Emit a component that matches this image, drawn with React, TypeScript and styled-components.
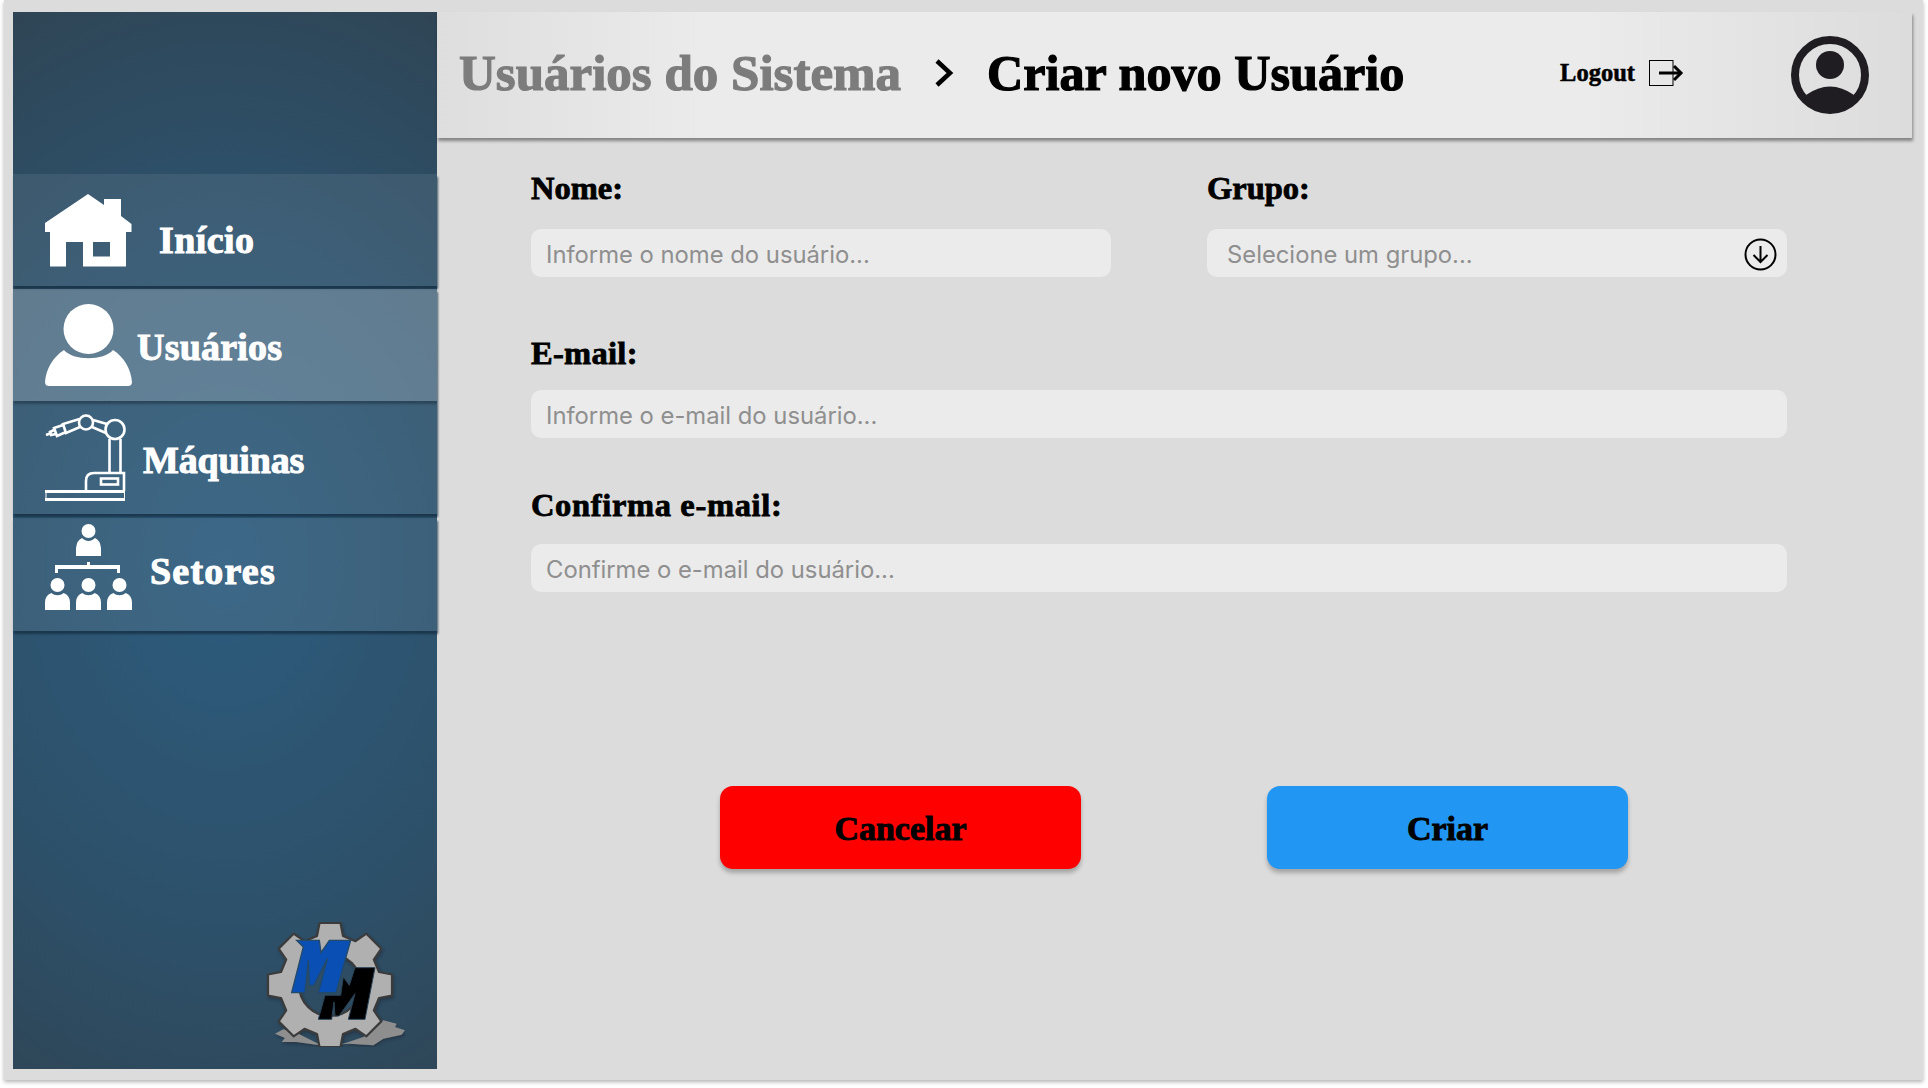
import React from "react";
import styled, { createGlobalStyle } from "styled-components";

const Global = createGlobalStyle`
  html, body { margin: 0; padding: 0; background: #fff; }
  #root { width: 1928px; height: 1088px; overflow: hidden; }
`;

const display = `"Liberation Serif", "Times New Roman", serif`;

const Page = styled.div`
  box-sizing: border-box;
  width: 1919px;
  height: 1080px;
  margin-left: 4px;
  padding: 12px 11px 11px 9px;
  background: #dcdcdc;
  box-shadow: 0 2px 4px rgba(0, 0, 0, 0.3);
  display: flex;
`;

const Sidebar = styled.aside`
  width: 424px;
  flex: none;
  display: flex;
  flex-direction: column;
  padding-top: 162px;
  box-sizing: border-box;
  background: radial-gradient(ellipse 110% 58% at 50% 52%, #2d5c7e 0%, #2d5069 62%, #2f4555 100%);
`;

const NavItem = styled.div<{ $active?: boolean; $gap: number; $h: number; $mt?: number }>`
  height: ${(p) => p.$h}px;
  margin-top: ${(p) => p.$mt ?? 0}px;
  flex: none;
  box-sizing: border-box;
  padding-left: 32px;
  display: flex;
  align-items: center;
  gap: ${(p) => p.$gap}px;
  background: ${(p) => (p.$active ? "rgba(255, 255, 255, 0.25)" : "rgba(255, 255, 255, 0.08)")};
  box-shadow: 1px 3px 2px rgba(20, 45, 65, 0.75);
`;

const NavIcon = styled.svg<{ $mb?: number }>`
  flex: none;
  fill: #fff;
  margin-bottom: ${(p) => p.$mb ?? 0}px;
`;

const NavLabel = styled.span<{ $dy: number; $ls?: number }>`
  font: 700 38px ${display};
  -webkit-text-stroke: 1px #fff;
  color: #fff;
  letter-spacing: ${(p) => p.$ls ?? 0.2}px;
  position: relative;
  top: ${(p) => p.$dy}px;
`;

const LogoSlot = styled.div`
  margin-top: auto;
  padding: 0 31px 22px 0;
  display: flex;
  justify-content: flex-end;
`;

const Main = styled.main`
  flex: 1;
  min-width: 0;
  display: flex;
  flex-direction: column;
`;

const Header = styled.header`
  height: 126px;
  flex: none;
  box-sizing: border-box;
  padding: 0 43px 0 22px;
  display: flex;
  align-items: center;
  background: linear-gradient(90deg, #dedede 0%, #ebebeb 18%, #ebebeb 78%, #dcdcdc 100%);
  box-shadow: 1px 3px 3px rgba(0, 0, 0, 0.4);
`;

const Crumb = styled.span<{ $muted?: boolean }>`
  font: 700 ${(p) => (p.$muted ? 51 : 50.2)}px ${display};
  white-space: nowrap;
  padding-bottom: 4px;
  color: ${(p) => (p.$muted ? "#7c7c7c" : "#000")};
  -webkit-text-stroke: 1.2px ${(p) => (p.$muted ? "#7c7c7c" : "#000")};
`;

const CrumbSep = styled.svg`
  margin: 0 33px 4px;
  flex: none;
`;

const LogoutWrap = styled.div`
  display: flex;
  align-items: center;
  gap: 14px;
  margin: 0 107px 4px auto;
`;

const LogoutText = styled.span`
  font: 700 24.5px ${display};
  -webkit-text-stroke: 0.5px #000;
  color: #000;
`;

const Form = styled.div`
  flex: 1;
  position: relative;
  padding: 29px 125px 0 94px;
  display: flex;
  flex-direction: column;
`;

const Row = styled.div<{ $mb: number }>`
  display: flex;
  gap: 96px;
  margin-bottom: ${(p) => p.$mb}px;
`;

const Field = styled.div<{ $w?: number }>`
  display: flex;
  flex-direction: column;
  flex: ${(p) => (p.$w ? `0 0 ${p.$w}px` : "1")};
`;

const Label = styled.label<{ $mb: number; $ls?: number }>`
  font: 700 32.5px/42px ${display};
  -webkit-text-stroke: 0.8px #000;
  color: #000;
  letter-spacing: ${(p) => p.$ls ?? 0}px;
  margin-bottom: ${(p) => p.$mb}px;
`;

const InputBox = styled.div<{ $pl?: number }>`
  height: 48px;
  box-sizing: border-box;
  border-radius: 10px;
  background: #ebebeb;
  padding: 2px 10px 0 ${(p) => p.$pl ?? 15}px;
  display: flex;
  align-items: center;
  justify-content: space-between;
  font: 400 23.8px Inter, "Liberation Sans", sans-serif;
  color: #8f8f8f;
`;

const Buttons = styled.div`
  display: flex;
  gap: 186px;
  margin-left: 189px;
  margin-top: 194px;
`;

const Btn = styled.button<{ $bg: string }>`
  width: 361px;
  height: 83px;
  border: 0;
  border-radius: 13px;
  padding: 2px 0 0;
  background: ${(p) => p.$bg};
  box-shadow: 0 4px 4px rgba(0, 0, 0, 0.25);
  font: 700 34px ${display};
  -webkit-text-stroke: 0.9px #000;
  color: #000;
`;

const House = () => (
  <NavIcon width="87" height="73" viewBox="0 0 87 73">
    <path fillRule="evenodd" d="M43 0 L59 11 V5 H76 V22 L86.500 30 V38 H81 V72.500 H38 V48 H21 V72.500 H5 V38 H0 V29 Z M48 48 V62.500 H65 V48 Z" />
  </NavIcon>
);

const Person = () => (
  <NavIcon width="87" height="82" viewBox="0 0 87 82">
    <circle cx="43.500" cy="25" r="25" />
    <path d="M19 46 C28 57 59 57 68 46 C79 53 86 65 87 78 C87 81 85 82 83 82 H4 C2 82 0 81 0 78 C1 65 8 53 19 46 Z" />
  </NavIcon>
);

const Robot = () => (
  <NavIcon width="81" height="87" viewBox="0 0 81 87" style={{ fill: "none" }}>
    <g stroke="#fff" strokeWidth="2.600" fill="none">
      <circle cx="41" cy="8.500" r="7" />
      <circle cx="70" cy="15.500" r="9.500" />
      <path d="M48 6 L62 10 M47 13 L61 19" />
      <path d="M34.500 5 L18 10 L21 19 L35 13" />
      <path d="M18 11 L9 14 L12 22 L21 18" />
      <path d="M9 16 L5 18 L6 21 L11 20" />
      <path d="M5 19.500 L1 21" />
      <path d="M64.500 25 V59 M75.500 25 V59" />
      <path d="M41 77 V67 Q41 59 49 59 H79 V77" />
      <rect x="56" y="64.500" width="17" height="6" />
      <path d="M0 77.500 H80 M0 85.500 H80" strokeWidth="3" />
      <path d="M1 77 V86 M79.500 77 V86" strokeWidth="1" />
    </g>
  </NavIcon>
);

const Sectors = () => (
  <NavIcon width="87" height="87" viewBox="0 0 87 87" $mb={14}>
    <circle cx="43.500" cy="7" r="7" />
    <path d="M31 32 V24 Q32 16 37 14 C41 18 46 18 50 14 Q55 16 56 24 V32 Z" />
    <path d="M10 41 H42 V38 H45 V41 H75 V49 H72 V45 H13 V49 H10 Z" />
    {[12.500, 43.500, 74.500].map((x) => (
      <g key={x}>
        <circle cx={x} cy="61" r="7" />
        <path d={`M${x - 12.500} 86 V78 Q${x - 12} 71 ${x - 6} 69 C${x - 3} 72 ${x + 3} 72 ${x + 6} 69 Q${x + 12} 71 ${x + 12.500} 78 V86 Z`} />
      </g>
    ))}
  </NavIcon>
);

const gearPath = (() => {
  const cx = 64;
  const cy = 63;
  const outer = 62;
  const root = 49;
  const pts: string[] = [];
  for (let i = 0; i < 8; i++) {
    const a = (i * Math.PI) / 4 - Math.PI / 2;
    const ux = Math.cos(a);
    const uy = Math.sin(a);
    const vx = -uy;
    const vy = ux;
    const corner = (r: number, w: number) => `${(cx + ux * r + vx * w).toFixed(1)} ${(cy + uy * r + vy * w).toFixed(1)}`;
    pts.push(corner(root, -13), corner(outer, -10.5), corner(outer, 10.5), corner(root, 13));
  }
  const ring = `M${pts.join(" L")} Z`;
  const r = 31;
  const hole = `M${cx - r} ${cy} a${r} ${r} 0 1 0 ${2 * r} 0 a${r} ${r} 0 1 0 ${-2 * r} 0 Z`;
  return `${ring} ${hole}`;
})();

const Logo = () => (
  <svg width="140" height="125" viewBox="0 0 140 125">
    <defs>
      <filter id="logoShadow" x="-10%" y="-10%" width="120%" height="120%">
        <feDropShadow dx="1" dy="2" stdDeviation="1.500" floodColor="#1a2a35" floodOpacity="0.55" />
      </filter>
    </defs>
    <g filter="url(#logoShadow)">
      <g transform="scale(0.33333) translate(-78 -60)">
        <path d="M105 395 L130 382 L175 395 L235 425 L310 425 L370 405 L430 355 L470 365 L465 375 L495 385 L485 398 L430 410 L400 430 L330 425 L240 430 L170 420 L125 420 L135 408 Z" fill="#8e8e8e" />
      </g>
      <path d={gearPath} fill="#b0b0b0" fillRule="evenodd" stroke="#3b3b3b" strokeWidth="2.200" strokeLinejoin="round" />
    </g>
    <g transform="scale(0.33333) translate(-78 -60)">
      <path d="M170 115 H238 L243 152 L268 115 H332 L288 272 H235 L262 170 L222 250 H208 L205 175 L195 272 H155 L190 135 Z" fill="#0a4fb4" stroke="#244a6a" strokeWidth="4" />
      <path d="M345 197 H405 L375 352 H325 L345 275 L297 342 H285 L282 300 L275 352 H235 L255 280 H302 L310 225 L328 250 Z" fill="#000" stroke="#2a4256" strokeWidth="3" />
    </g>
  </svg>
);

const LogoutIcon = () => (
  <svg width="35" height="27" viewBox="0 0 35 27">
    <rect x="0.500" y="0.500" width="23.500" height="25" fill="none" stroke="#000" strokeWidth="1" />
    <path d="M10 13 H31" stroke="#000" strokeWidth="3" />
    <path d="M25 6 L32 13 L25 20" fill="none" stroke="#000" strokeWidth="3" />
  </svg>
);

const Avatar = () => (
  <svg width="78" height="78" viewBox="0 0 78 78">
    <circle cx="39" cy="39" r="35" fill="none" stroke="#1f1d21" strokeWidth="8" />
    <circle cx="39" cy="29" r="14" fill="#1f1d21" />
    <path d="M15 59 Q39 42 63 59 Q54 74 39 74 Q24 74 15 59 Z" fill="#1f1d21" />
  </svg>
);

const DownCircle = () => (
  <svg width="33" height="33" viewBox="0 0 33 33">
    <circle cx="16.500" cy="16.500" r="15" fill="none" stroke="#000" strokeWidth="2" />
    <path d="M16.500 8 V24 M9.500 17 L16.500 24 L23.500 17" fill="none" stroke="#000" strokeWidth="2" />
  </svg>
);

export default function App() {
  return (
    <Page>
      <Global />
      <Sidebar>
        <NavItem $h={112} $gap={27}>
          <House />
          <NavLabel $dy={10} $ls={0.4}>Início</NavLabel>
        </NavItem>
        <NavItem $h={112} $gap={5} $active $mt={3}>
          <Person />
          <NavLabel $dy={2}>Usuários</NavLabel>
        </NavItem>
        <NavItem $h={113} $gap={17}>
          <Robot />
          <NavLabel $dy={2} $ls={-0.2}>Máquinas</NavLabel>
        </NavItem>
        <NavItem $h={113} $gap={18} $mt={4}>
          <Sectors />
          <NavLabel $dy={-4} $ls={1.2}>Setores</NavLabel>
        </NavItem>
        <LogoSlot>
          <Logo />
        </LogoSlot>
      </Sidebar>
      <Main>
        <Header>
          <Crumb $muted>Usuários do Sistema</Crumb>
          <CrumbSep width="20" height="30" viewBox="0 0 20 30">
            <path d="M3 3 L16 15 L3 27" fill="none" stroke="#000" strokeWidth="4.500" />
          </CrumbSep>
          <Crumb>Criar novo Usuário</Crumb>
          <LogoutWrap>
            <LogoutText>Logout</LogoutText>
            <LogoutIcon />
          </LogoutWrap>
          <Avatar />
        </Header>
        <Form>
          <Row $mb={55}>
            <Field $w={580}>
              <Label $mb={20}>Nome:</Label>
              <InputBox>Informe o nome do usuário...</InputBox>
            </Field>
            <Field>
              <Label $mb={20}>Grupo:</Label>
              <InputBox $pl={20}>
                Selecione um grupo...
                <DownCircle />
              </InputBox>
            </Field>
          </Row>
          <Row $mb={46}>
            <Field>
              <Label $mb={16} $ls={0.3}>E-mail:</Label>
              <InputBox>Informe o e-mail do usuário...</InputBox>
            </Field>
          </Row>
          <Row $mb={0}>
            <Field>
              <Label $mb={18} $ls={0.65}>Confirma e-mail:</Label>
              <InputBox>Confirme o e-mail do usuário...</InputBox>
            </Field>
          </Row>
          <Buttons>
            <Btn $bg="#ff0000">Cancelar</Btn>
            <Btn $bg="#2196f3">Criar</Btn>
          </Buttons>
        </Form>
      </Main>
    </Page>
  );
}
